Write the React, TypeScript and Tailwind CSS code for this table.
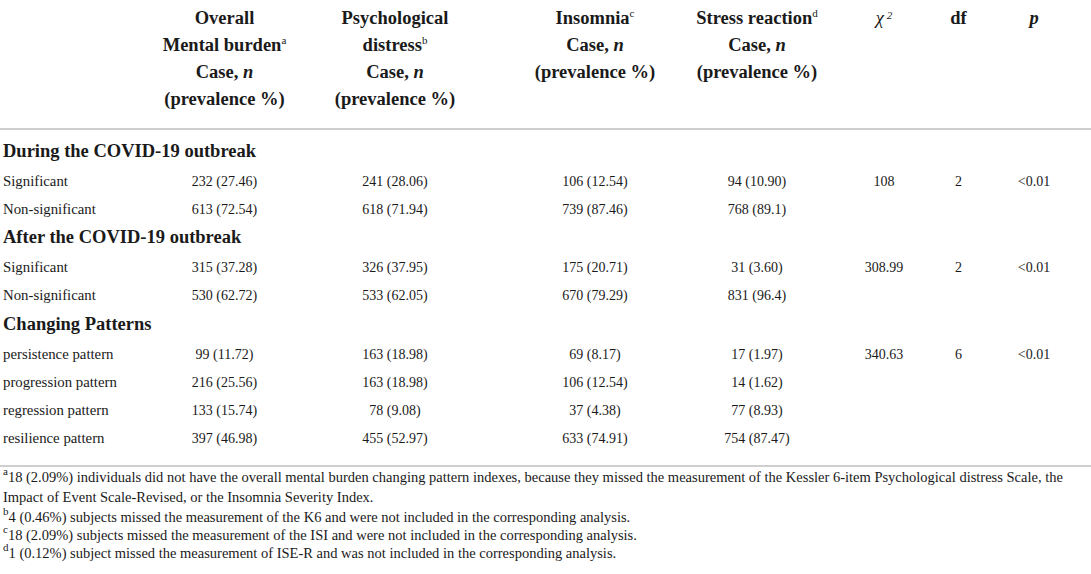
import React from 'react';

const serif = { fontFamily: '"Liberation Serif", "Times New Roman", serif' };

const cols = 'grid grid-cols-[140px_169px_186px_181px_144px_101px_75px_95px]';

// per-column nudges so cell centres match the printed table
const shift = ['', '', 'pr-[14px]', 'pl-[19px]', 'pl-[18px]', 'pl-[27px]', '', 'pr-[19px]'];

type Row = { label: string; vals: string[]; stat?: [string, string, string] };

const sections: { title: string; h: string; rows: Row[] }[] = [
  {
    title: 'During the COVID-19 outbreak',
    h: 'h-[30px]',
    rows: [
      { label: 'Significant', vals: ['232 (27.46)', '241 (28.06)', '106 (12.54)', '94 (10.90)'], stat: ['108', '2', '<0.01'] },
      { label: 'Non-significant', vals: ['613 (72.54)', '618 (71.94)', '739 (87.46)', '768 (89.1)'] },
    ],
  },
  {
    title: 'After the COVID-19 outbreak',
    h: 'h-[30px]',
    rows: [
      { label: 'Significant', vals: ['315 (37.28)', '326 (37.95)', '175 (20.71)', '31 (3.60)'], stat: ['308.99', '2', '<0.01'] },
      { label: 'Non-significant', vals: ['530 (62.72)', '533 (62.05)', '670 (79.29)', '831 (96.4)'] },
    ],
  },
  {
    title: 'Changing Patterns',
    h: 'h-[31px]',
    rows: [
      { label: 'persistence pattern', vals: ['99 (11.72)', '163 (18.98)', '69 (8.17)', '17 (1.97)'], stat: ['340.63', '6', '<0.01'] },
      { label: 'progression pattern', vals: ['216 (25.56)', '163 (18.98)', '106 (12.54)', '14 (1.62)'] },
      { label: 'regression pattern', vals: ['133 (15.74)', '78 (9.08)', '37 (4.38)', '77 (8.93)'] },
      { label: 'resilience pattern', vals: ['397 (46.98)', '455 (52.97)', '633 (74.91)', '754 (87.47)'] },
    ],
  },
];

const Sup = ({ children }: { children: React.ReactNode }) => (
  <sup className="text-[11px] font-normal -top-[0.6em]">{children}</sup>
);

const HeadCell = ({ i, children }: { i: number; children?: React.ReactNode }) => (
  <div className={`flex justify-center text-center whitespace-nowrap ${shift[i]}`}>
    <div>{children}</div>
  </div>
);

export default function App() {
  return (
    <div className="w-[1091px] h-[574px] bg-white text-[#1a1a1a] overflow-hidden" style={serif}>
      <div className={`${cols} pt-[5px] pb-[15px] text-[18.5px] font-bold leading-[27px]`}>
        <div />
        <HeadCell i={1}>
          Overall
          <br />
          Mental burden<Sup>a</Sup>
          <br />
          Case, <i>n</i>
          <br />
          (prevalence %)
        </HeadCell>
        <HeadCell i={2}>
          Psychological
          <br />
          distress<Sup>b</Sup>
          <br />
          Case, <i>n</i>
          <br />
          (prevalence %)
        </HeadCell>
        <HeadCell i={3}>
          Insomnia<Sup>c</Sup>
          <br />
          Case, <i>n</i>
          <br />
          (prevalence %)
        </HeadCell>
        <HeadCell i={4}>
          Stress reaction<Sup>d</Sup>
          <br />
          Case, <i>n</i>
          <br />
          (prevalence %)
        </HeadCell>
        <HeadCell i={5}>
          <span className="italic font-normal">χ</span>
          <sup className="italic font-normal text-[11px] ml-[3px]">2</sup>
        </HeadCell>
        <HeadCell i={6}>df</HeadCell>
        <HeadCell i={7}>
          <i>p</i>
        </HeadCell>
      </div>

      <div className="h-[2px] bg-[#cfcfcf]" />

      <div className="pt-[7px]">
        {sections.map(s => (
          <div key={s.title}>
            <div className={`${s.h} flex items-center pl-[3px] text-[18.5px] font-bold`}>{s.title}</div>
            {s.rows.map((r, k) => (
              <div key={k} className={`${cols} h-[28px] items-center text-[14px]`}>
                <div className="pl-[3px] text-[14.8px]">{r.label}</div>
                {[...r.vals, ...(r.stat ?? ['', '', ''])].map((v, j) => (
                  <div key={j} className={`flex justify-center whitespace-nowrap ${shift[j + 1]}`}>
                    {v}
                  </div>
                ))}
              </div>
            ))}
          </div>
        ))}
      </div>

      <div className="mt-[13px] h-[2px] bg-[#cfcfcf]" />

      <div className="pl-[3px] pr-[4px] text-[14.5px] leading-[18px]">
        <p className="leading-[20px]">
          <Sup>a</Sup>18 (2.09%) individuals did not have the overall mental burden changing pattern indexes, because they missed
          the measurement of the Kessler 6-item Psychological distress Scale, the Impact of Event Scale-Revised, or the Insomnia
          Severity Index.
        </p>
        <p className="mt-[1px]">
          <Sup>b</Sup>4 (0.46%) subjects missed the measurement of the K6 and were not included in the corresponding analysis.
        </p>
        <p>
          <Sup>c</Sup>18 (2.09%) subjects missed the measurement of the ISI and were not included in the corresponding analysis.
        </p>
        <p>
          <Sup>d</Sup>1 (0.12%) subject missed the measurement of ISE-R and was not included in the corresponding analysis.
        </p>
      </div>
    </div>
  );
}
